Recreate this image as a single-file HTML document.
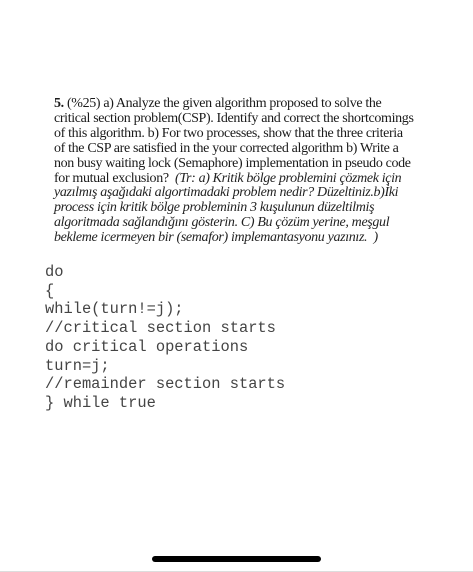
<!DOCTYPE html>
<html><head><meta charset="utf-8"><style>
html,body{margin:0;padding:0;background:#fff;width:473px;height:572px;overflow:hidden;position:relative}
.q{position:absolute;left:54px;top:97px;font-family:"Liberation Serif",serif;font-size:14px;line-height:14.9px;color:#1a1a1a;letter-spacing:-0.35px;white-space:nowrap}
.q i{color:#222}
.c{position:absolute;left:45px;top:263px;font-family:"Liberation Mono",monospace;font-size:15.4px;line-height:18.7px;color:#444;white-space:pre}
.bar{position:absolute;left:152px;top:556px;width:169px;height:6px;border-radius:3px;background:#000}
.line{position:absolute;left:0;top:571px;width:473px;height:1px;background:#ddd}
</style></head><body>
<div class="q"><b>5.</b> (%25) a) Analyze the given algorithm proposed to solve the<br>critical section problem(CSP). Identify and correct the shortcomings<br>of this algorithm. b) For two processes, show that the three criteria<br>of the CSP are satisfied in the your corrected algorithm b) Write a<br>non busy waiting lock (Semaphore) implementation in pseudo code<br>for mutual exclusion? &nbsp;<i>(Tr: a) Kritik bölge problemini çözmek için<br>yazılmış aşağıdaki algortimadaki problem nedir? Düzeltiniz.b)İki<br>process için kritik bölge probleminin 3 kuşulunun düzeltilmiş<br>algoritmada sağlandığını gösterin. C) Bu çözüm yerine, meşgul<br>bekleme icermeyen bir (semafor) implemantasyonu yazınız. &nbsp;)</i></div>
<div class="c">do
{
while(turn!=j);
//critical section starts
do critical operations
turn=j;
//remainder section starts
} while true</div>
<div class="bar"></div>
<div class="line"></div>
</body></html>
